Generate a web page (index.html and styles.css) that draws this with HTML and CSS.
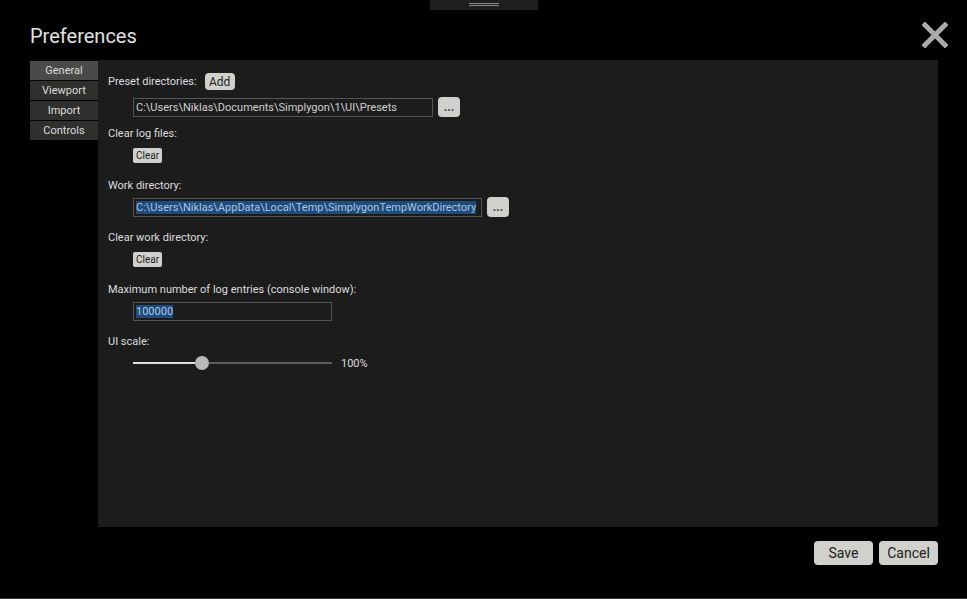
FILE: index.html
```html
<!DOCTYPE html>
<html lang="en">
<head>
  <meta charset="UTF-8" />
  <meta name="viewport" content="width=device-width, initial-scale=1.0"/>
  <title>Preferences</title>
  <link rel="stylesheet" href="styles.css">
</head>
<body>
  <div class="window">
    <div class="handle"><span></span><span></span></div>

    <header>
      <h1>Preferences</h1>
      <svg class="close" width="26" height="26" viewBox="0 0 26 26">
        <path d="M3 3 L23 23 M23 3 L3 23" stroke="#aaaaaa" stroke-width="5" stroke-linecap="square"/>
      </svg>
    </header>

    <main>
      <nav class="tabs">
        <div class="tab active">General</div>
        <div class="tab">Viewport</div>
        <div class="tab">Import</div>
        <div class="tab">Controls</div>
      </nav>

      <section class="panel">
        <div class="row">
          <span class="label">Preset directories:</span>
          <button class="btn add">Add</button>
        </div>
        <div class="row indent gap-7">
          <div class="field" style="width:300px;">C:\Users\Niklas\Documents\Simplygon\1\UI\Presets</div>
          <button class="btn dots">...</button>
        </div>

        <div class="label gap-9">Clear log files:</div>
        <div class="indent gap-6"><button class="btn small">Clear</button></div>

        <div class="label gap-15">Work directory:</div>
        <div class="row indent gap-3">
          <div class="field" style="width:349px;"><span class="sel">C:\Users\Niklas\AppData\Local\Temp\SimplygonTempWorkDirectory</span></div>
          <button class="btn dots">...</button>
        </div>

        <div class="label gap-13">Clear work directory:</div>
        <div class="indent gap-6"><button class="btn small">Clear</button></div>

        <div class="label gap-15">Maximum number of log entries (console window):</div>
        <div class="indent gap-4">
          <div class="field" style="width:199px;"><span class="sel">100000</span></div>
        </div>

        <div class="label gap-13">UI scale:</div>
        <div class="row indent slider-row">
          <div class="slider">
            <div class="fill"></div>
            <div class="knob"></div>
            <div class="rest"></div>
          </div>
          <span class="value">100%</span>
        </div>
      </section>
    </main>

    <footer>
      <button class="btn big">Save</button>
      <button class="btn big">Cancel</button>
    </footer>

    <div class="bottom-line"></div>
  </div>
</body>
</html>
```

FILE: styles.css
```css
/* Base Styles */
body {
  margin: 0;
  padding: 0;
  background-color: #000000;
  color: #dddddd;
  font-family: Roboto, 'Noto Sans', sans-serif;
  font-size: 11px;
}

.window {
  height: 599px;
  display: flex;
  flex-direction: column;
}

.handle {
  width: 108px;
  height: 10px;
  margin-left: 430px;
  background-color: #1e1e1e;
  display: flex;
  flex-direction: column;
  align-items: center;
  padding-top: 3px;
  box-sizing: border-box;
  gap: 1px;
}

.handle span {
  display: block;
  width: 30px;
  height: 1px;
  background-color: #8a8a8a;
}

header {
  height: 50px;
  padding: 0 19px 0 30px;
  display: flex;
  justify-content: space-between;
  align-items: center;
}

header h1 {
  margin: 2px 0 0 0;
  font-size: 20px;
  font-weight: 400;
  color: #e0e0e0;
}

main {
  display: flex;
  height: 467px;
  padding: 0 29px 0 30px;
}

.tabs {
  width: 68px;
  padding-top: 1px;
  display: flex;
  flex-direction: column;
  gap: 1px;
}

.tab {
  height: 19px;
  line-height: 19px;
  text-align: center;
  background-color: #2f2f2d;
  color: #dcdcdc;
}

.tab.active {
  background-color: #4a4a48;
}

.panel {
  flex: 1;
  background-color: #1c1c1c;
  border-radius: 0 0 3px 0;
  padding: 13px 10px 0 10px;
}

.row {
  display: flex;
  align-items: center;
}

.label {
  color: #dcdcdc;
  line-height: 16px;
}

.indent {
  padding-left: 25px;
}

.gap-3 { margin-top: 3px; }
.gap-4 { margin-top: 4px; }
.gap-6 { margin-top: 6px; }
.gap-7 { margin-top: 7px; }
.gap-9 { margin-top: 9px; }
.gap-13 { margin-top: 13px; }
.gap-15 { margin-top: 15px; }

.btn {
  font-family: Roboto, 'Noto Sans', sans-serif;
  background-color: #d0d0cc;
  color: #1e1e1e;
  border: none;
  border-radius: 4px;
  padding: 0;
  cursor: pointer;
}

.add {
  margin-left: 8px;
  width: 30px;
  height: 17px;
  font-size: 12px;
}

.dots {
  margin-left: 5px;
  width: 22px;
  height: 20px;
  font-size: 12px;
  font-weight: bold;
  line-height: 14px;
  color: #444;
}

.small {
  width: 29px;
  height: 15px;
  font-size: 10px;
  border-radius: 2px;
  display: block;
}

.field {
  height: 19px;
  box-sizing: border-box;
  border: 1px solid #555555;
  background-color: #1c1c1c;
  color: #d0d0d0;
  line-height: 17px;
  padding-left: 2px;
  white-space: nowrap;
  overflow: hidden;
}

.sel {
  background-color: #1f4b7a;
  color: #a9c6e4;
}

.slider-row {
  margin-top: 6px;
  height: 14px;
}

.slider {
  width: 199px;
  display: flex;
  align-items: center;
}

.fill {
  width: 62px;
  height: 2px;
  background-color: #e0e0e0;
}

.knob {
  width: 14px;
  height: 14px;
  border-radius: 50%;
  background-color: #b9b9b7;
}

.rest {
  flex: 1;
  height: 2px;
  background-color: #5e5e5a;
}

.value {
  margin-left: 9px;
  color: #dcdcdc;
}

footer {
  margin-top: 14px;
  padding-right: 29px;
  display: flex;
  justify-content: flex-end;
  gap: 6px;
}

.big {
  width: 59px;
  height: 24px;
  font-size: 14px;
  color: #222;
}

.bottom-line {
  margin-top: auto;
  height: 1px;
  background-color: #3a3a3a;
}
```
